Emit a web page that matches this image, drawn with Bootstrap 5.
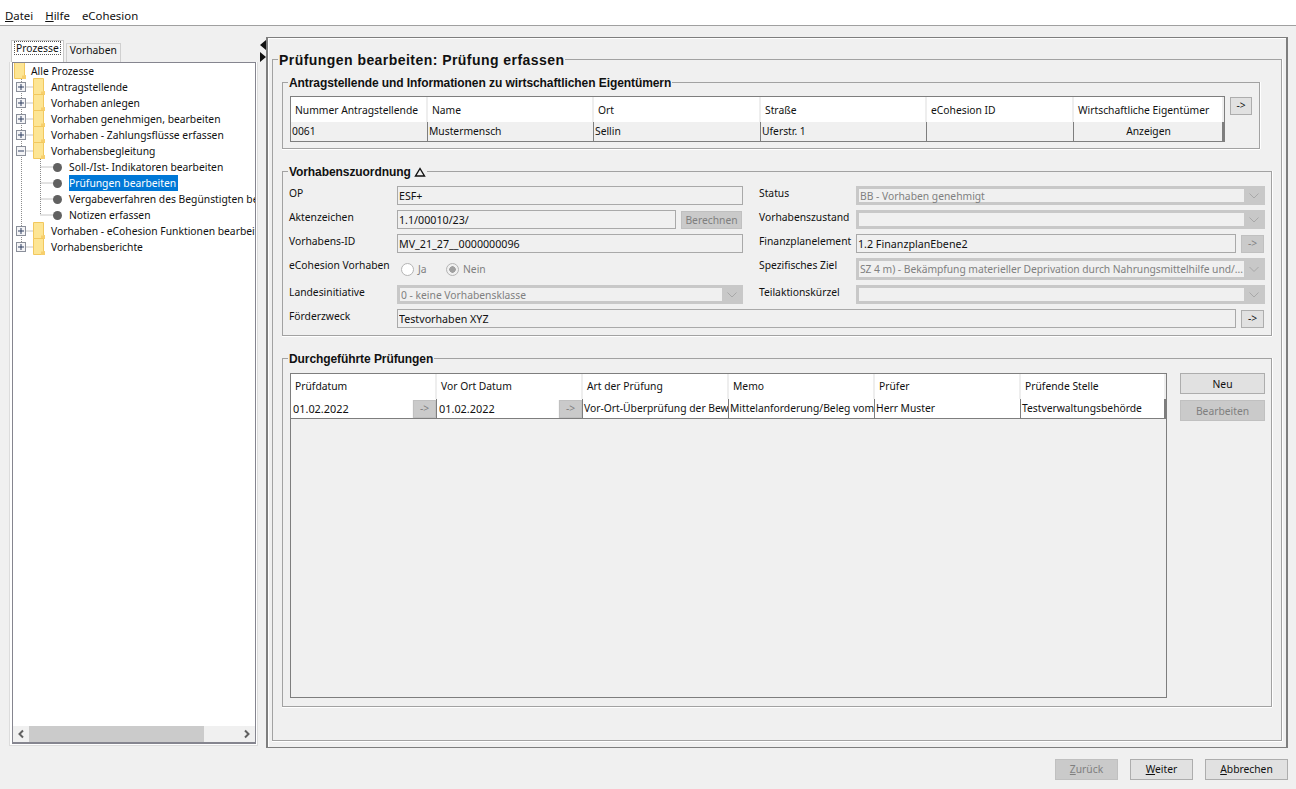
<!DOCTYPE html>
<html lang="de">
<head>
    <meta charset="UTF-8">
    <meta name="viewport" content="width=device-width, initial-scale=1.0">
    <title>Prüfungen bearbeiten</title>
    <link href="https://cdn.jsdelivr.net/npm/bootstrap@5.3.3/dist/css/bootstrap.min.css" rel="stylesheet">
    <style>
        html, body { height: 100%; }
        body {
            margin: 0;
            overflow: hidden;
            background: #f0f0f0;
            color: #111;
            font-family: "Noto Sans", "Liberation Sans", sans-serif;
            font-size: 10.3px;
            line-height: 16px;
        }
        .app-shell { height: 789px; }

        /* menu */
        .menu-bar { height: 26px; background: #fff; border-bottom: 1px solid #a0a0a0; padding: 6px 0 0 5px; gap: 12px; font-size: 11.4px; }
        .menu-bar a { color: #111; text-decoration: none; }
        .menu-bar u { text-decoration: underline; }

        .work-area { height: 721px; }

        /* left */
        .side-col { width: 249px; margin-left: 9px; padding-top: 14px; }
        .tab-strip { height: 22px; padding-left: 2px; gap: 2px; }
        .tab-item { border: 1px solid #d0d0d0; border-bottom: 0; padding: 0 3px; height: 19px; line-height: 13px; }
        .tab-item.is-active { height: 22px; background: #fff; border-color: #c8c8c8; line-height: 12px; padding: 1px 3px 0; }
        .tab-item.is-active span { outline: 1px dotted #555; padding: 0 1px; display: inline-block; line-height: 12px; }
        .tree-outer { height: 684px; padding: 0 1px 1px 2px; border: 1px solid #dcdcdc; border-top: 0; background: #fff; }
        .tree-box { height: 100%; border: 1px solid #85858f; border-width: 1px 1px 2px 1px; background: #fff; overflow: hidden; }
        .tree-rows { overflow: hidden; }
        .tree-lines { position: absolute; left: 0; top: 0; }
        .tree-row { height: 16px; white-space: nowrap; position: relative; }
        .lvl-0 { padding-left: 0; }
        .lvl-1 { padding-left: 19px; }
        .lvl-2 { padding-left: 40px; }
        .tree-folder { width: 14px; height: 18px; flex: none; margin-right: 5px; }
        .lvl-0 .tree-folder { margin-right: 4px; }
        .tree-twisty { position: absolute; left: 3px; top: 3px; width: 10px; height: 10px; }
        .tree-dot { width: 9px; height: 9px; border-radius: 50%; background: #616161; flex: none; margin-right: 7px; }
        .tree-sel { background: #0078d7; color: #fff; padding-right: 2px; }
        .scroll-track { height: 16px; background: #f0f0f0; flex: none; }
        .scroll-arrow { width: 16px; flex: none; }
        .scroll-thumb { width: 175px; background: #cbcbcb; }

        /* splitter */
        .split-col { width: 8px; padding-top: 14px; padding-left: 2px; }

        /* right */
        .main-frame { width: 1022px; height: 711px; margin-top: 11px; border: 1px solid #7e7e7e; border-left-width: 2px; border-right-width: 2px; box-shadow: inset 1px 1px 0 #fff; padding: 0 4px 5px 4px; }
        fieldset.box-set { border: 1px solid #a2a2a2; padding: 0 7px; margin: 0; box-shadow: 0 1px 0 #fff, 1px 0 0 #fff; }
        fieldset.box-set > legend { float: none; width: auto; height: 14px; margin: 0 0 0 -2px; padding: 0 1px; font-family: "Liberation Sans", Arial, sans-serif; font-weight: 700; font-size: 12px; line-height: 16px; letter-spacing: -.08px; color: #111; }
        .page-set { height: 690px; margin-top: 13px !important; padding: 0 9px !important; }
        fieldset.page-set > legend { height: 16px; font-size: 14px; line-height: 18px; letter-spacing: .45px; margin-left: -4px; }
        .owner-set { margin-top: 8px !important; margin-right: 12px !important; padding-top: 7px !important; padding-bottom: 6px !important; }
        .assign-set { margin-top: 15px !important; padding: 8px 7px 7px 6px !important; }
        fieldset.assign-set > legend { margin-left: -1px; }
        .checks-set { margin-top: 15px !important; padding-top: 8px !important; padding-bottom: 8px !important; }

        /* tables */
        .data-table { table-layout: fixed; border-collapse: separate; border-spacing: 0; margin: 0; width: 100%; --bs-table-bg: transparent; }
        .data-table th, .data-table td { font-weight: 400; padding: 0; white-space: nowrap; overflow: hidden; border: 0; color: #111; }
        .data-table th { background: #fff; height: 25px; padding: 1px 0 0 4px; border-right: 2px solid #eee; vertical-align: middle; }
        .data-table td { height: 20px; padding: 0 0 1px 1px; border-right: 1px solid #7e7e7e; border-bottom: 1px solid #7e7e7e; vertical-align: middle; }
        .owner-wrap { border: 1px solid #7e7e7e; border-bottom: 0; width: 935px; }
        .owner-wrap td { background: #f0f0f0; }
        .owner-wrap td:last-child, .checks-wrap td:last-child { border-right-width: 2px; }
        .checks-wrap { border: 1px solid #7e7e7e; width: 877px; height: 325px; }
        .checks-wrap th { padding-top: 0; padding-bottom: 1px; }
        .checks-wrap td { background: #fff; }
        .date-cell { padding: 0 !important; }
        .date-cell .date-text { padding: 1px 0 0 2px; width: 121px; font-size: 10.9px; }
        .date-cell .date-fill { background: #f7f7f7; }

        /* buttons */
        .flat-btn { --bs-btn-padding-x: 0; --bs-btn-padding-y: 0; --bs-btn-font-size: 10.3px; --bs-btn-line-height: 16px; --bs-btn-border-radius: 0; background: #e1e1e1; border: 1px solid #adadad; color: #111; height: 21px; width: 63px; }
        .flat-btn:disabled, .flat-btn.disabled { background: #cacaca; border-color: #c0c0c0; color: #7f7f7f; opacity: 1; }
        .flat-btn u { text-decoration: underline; }
        .arrow-btn { width: 23px; height: 18px; line-height: 14px; padding: 0 0 2px 0; }
        .owner-arrow { margin: 1px 0 0 5px; }
        .field-arrow { margin: 1px 0 0 5px; }
        .calc-btn { height: 18px; width: 61px; margin: 1px 0 0 1px; }

        /* form grid */
        .form-lines { display: grid; grid-template-columns: 108px 346px 16px 97px 409px; grid-template-rows: 19px 19px 19px 22px 19px 19px; row-gap: 5px; }
        .form-lab { line-height: 14px; }
        .plain-input { border-radius: 0; height: 19px; min-height: 0; padding: 0 1px; border: 1px solid #a9a9a9; background: #f0f0f0 !important; font-size: 10.7px; line-height: 17px; color: #111; opacity: 1; box-shadow: none !important; }
        .combo-box { height: 19px; background: #c8c8c8; padding: 3px; color: #808080; }
        .combo-tall { height: 22px; }
        .combo-text { background: #f0f0f0; flex-grow: 1; line-height: 15px; height: 13px; padding-left: 1px; white-space: nowrap; min-width: 0; }
        .combo-tall .combo-text { line-height: 16px; height: 16px; letter-spacing: -.04px; overflow: hidden; }
        .combo-arrow { width: 16px; flex: none; margin-left: 2px; }
        .radio-mark { width: 13px; height: 13px; margin: 0 4px 0 0; border: 1px solid #b4b4b4; background-color: #fff; border-radius: 50%; appearance: none; flex: none; opacity: 1 !important; }
        .radio-mark:checked { background: radial-gradient(circle, #a0a0a0 0 3px, #f0f0f0 3.5px); }
        .radio-text { color: #808080; }
        .radio-ja { width: 28px; }
        .side-buttons { width: 85px; margin-left: 13px; gap: 6px; }
        .side-buttons .flat-btn { width: 85px; height: 21px; }
        .bottom-bar { gap: 12px; padding: 12px 8px 0 0; }
        .bottom-bar .flat-btn { padding-bottom: 2px; }
        .wide-btn { width: 83px; }
        .wide-field { grid-column: 2 / 6; }
    </style>
</head>
<body>
    <svg width="0" height="0" class="position-absolute">
        <symbol id="folder" viewBox="0 0 14 18">
            <path d="M1.5.5H11.5V13.5H12.5V16.5H1.5Z" fill="#fde594" stroke="#f2c85e"/>
            <path d="M9 13.5H13V17H9Z" fill="#f7cf6d"/>
        </symbol>
        <symbol id="plusbox" viewBox="0 0 10 10">
            <rect x=".5" y=".5" width="9" height="9" fill="#f4f4f6" stroke="#8a8f9a"/>
            <path d="M2 5H8M5 2V8" stroke="#2f3f60"/>
        </symbol>
        <symbol id="minusbox" viewBox="0 0 10 10">
            <rect x=".5" y=".5" width="9" height="9" fill="#f4f4f6" stroke="#8a8f9a"/>
            <path d="M2 5H8" stroke="#2f3f60"/>
        </symbol>
        <symbol id="chev" viewBox="0 0 16 13">
            <path d="M3.5 4.5L8 9L12.5 4.5" fill="none" stroke="#a8a8a8"/>
        </symbol>
    </svg>

    <div class="app-shell d-flex flex-column">
        <nav class="menu-bar d-flex align-items-center">
            <a href="#"><u>D</u>atei</a>
            <a href="#"><u>H</u>ilfe</a>
            <a href="#">eCohesion</a>
        </nav>

        <div class="work-area d-flex">
            <!-- process tree -->
            <div class="side-col flex-none">
                <div class="tab-strip d-flex align-items-end">
                    <div class="tab-item is-active"><span>Prozesse</span></div>
                    <div class="tab-item">Vorhaben</div>
                </div>
                <div class="tree-outer">
                    <div class="tree-box d-flex flex-column">
                        <div class="tree-rows flex-grow-1 position-relative">
                            <svg class="tree-lines" width="243" height="200">
                                <path d="M8.5 16V184M8.5 24H20M8.5 40H20M8.5 56H20M8.5 72H20M8.5 88H20M8.5 168H20M8.5 184H20" stroke="#8c8c8c" stroke-dasharray="1 1" fill="none"/>
                                <path d="M27.5 96V152M27.5 104H41M27.5 120H41M27.5 136H41M27.5 152H41" stroke="#8c8c8c" stroke-dasharray="1 1" fill="none"/>
                            </svg>
                            <div class="tree-row lvl-0 d-flex align-items-center"><svg class="tree-folder"><use href="#folder"/></svg>Alle Prozesse</div>
                            <div class="tree-row lvl-1 d-flex align-items-center"><svg class="tree-twisty"><use href="#plusbox"/></svg><svg class="tree-folder"><use href="#folder"/></svg>Antragstellende</div>
                            <div class="tree-row lvl-1 d-flex align-items-center"><svg class="tree-twisty"><use href="#plusbox"/></svg><svg class="tree-folder"><use href="#folder"/></svg>Vorhaben anlegen</div>
                            <div class="tree-row lvl-1 d-flex align-items-center"><svg class="tree-twisty"><use href="#plusbox"/></svg><svg class="tree-folder"><use href="#folder"/></svg>Vorhaben genehmigen, bearbeiten</div>
                            <div class="tree-row lvl-1 d-flex align-items-center"><svg class="tree-twisty"><use href="#plusbox"/></svg><svg class="tree-folder"><use href="#folder"/></svg>Vorhaben - Zahlungsflüsse erfassen</div>
                            <div class="tree-row lvl-1 d-flex align-items-center"><svg class="tree-twisty"><use href="#minusbox"/></svg><svg class="tree-folder"><use href="#folder"/></svg>Vorhabensbegleitung</div>
                            <div class="tree-row lvl-2 d-flex align-items-center"><span class="tree-dot"></span>Soll-/Ist- Indikatoren bearbeiten</div>
                            <div class="tree-row lvl-2 d-flex align-items-center"><span class="tree-dot"></span><span class="tree-sel">Prüfungen bearbeiten</span></div>
                            <div class="tree-row lvl-2 d-flex align-items-center"><span class="tree-dot"></span>Vergabeverfahren des Begünstigten bearbeiten</div>
                            <div class="tree-row lvl-2 d-flex align-items-center"><span class="tree-dot"></span>Notizen erfassen</div>
                            <div class="tree-row lvl-1 d-flex align-items-center"><svg class="tree-twisty"><use href="#plusbox"/></svg><svg class="tree-folder"><use href="#folder"/></svg>Vorhaben - eCohesion Funktionen bearbeiten</div>
                            <div class="tree-row lvl-1 d-flex align-items-center"><svg class="tree-twisty"><use href="#plusbox"/></svg><svg class="tree-folder"><use href="#folder"/></svg>Vorhabensberichte</div>
                        </div>
                        <div class="scroll-track d-flex">
                            <div class="scroll-arrow d-flex align-items-center justify-content-center">
                                <svg width="8" height="10"><path d="M6 1.5L2.5 5L6 8.5" fill="none" stroke="#606060" stroke-width="2"/></svg>
                            </div>
                            <div class="scroll-thumb"></div>
                            <div class="flex-grow-1"></div>
                            <div class="scroll-arrow d-flex align-items-center justify-content-center">
                                <svg width="8" height="10"><path d="M2 1.5L5.5 5L2 8.5" fill="none" stroke="#606060" stroke-width="2"/></svg>
                            </div>
                        </div>
                    </div>
                </div>
            </div>

            <!-- one touch splitter -->
            <div class="split-col flex-none">
                <svg width="6" height="22" class="d-block"><path d="M6 0V10L0 5ZM0 12L6 17L0 22Z" fill="#111"/></svg>
            </div>

            <div class="main-frame flex-none">
                <fieldset class="box-set page-set">
                    <legend>Prüfungen bearbeiten: Prüfung erfassen</legend>

                    <fieldset class="box-set owner-set">
                        <legend>Antragstellende und Informationen zu wirtschaftlichen Eigentümern</legend>
                        <div class="d-flex align-items-start">
                            <div class="owner-wrap flex-none">
                                <table class="table data-table">
                                    <colgroup><col style="width:137px"><col style="width:166px"><col style="width:167px"><col style="width:166px"><col style="width:147px"><col style="width:150px"></colgroup>
                                    <thead><tr><th>Nummer Antragstellende</th><th>Name</th><th>Ort</th><th>Straße</th><th>eCohesion ID</th><th>Wirtschaftliche Eigentümer</th></tr></thead>
                                    <tbody><tr><td>0061</td><td>Mustermensch</td><td>Sellin</td><td>Uferstr. 1</td><td></td><td class="text-center">Anzeigen</td></tr></tbody>
                                </table>
                            </div>
                            <button type="button" class="btn flat-btn arrow-btn owner-arrow">-&gt;</button>
                        </div>
                    </fieldset>

                    <fieldset class="box-set assign-set">
                        <legend>Vorhabenszuordnung <svg width="12" height="10" style="vertical-align:-1px"><path d="M6 1.5L10.5 9H1.5Z" fill="none" stroke="#111" stroke-width="1.4"/></svg></legend>
                        <div class="form-lines">
                            <div class="form-lab">OP</div>
                            <input class="form-control plain-input" value="ESF+" readonly>
                            <div></div>
                            <div class="form-lab">Status</div>
                            <div class="combo-box d-flex"><div class="combo-text">BB - Vorhaben genehmigt</div><svg class="combo-arrow" height="13"><use href="#chev"/></svg></div>

                            <div class="form-lab">Aktenzeichen</div>
                            <div class="d-flex gap-1">
                                <input class="form-control plain-input flex-none" style="width:279px" value="1.1/00010/23/" readonly>
                                <button type="button" class="btn flat-btn calc-btn flex-none" disabled>Berechnen</button>
                            </div>
                            <div></div>
                            <div class="form-lab">Vorhabenszustand</div>
                            <div class="combo-box d-flex"><div class="combo-text"></div><svg class="combo-arrow" height="13"><use href="#chev"/></svg></div>

                            <div class="form-lab">Vorhabens-ID</div>
                            <input class="form-control plain-input" value="MV_21_27__0000000096" readonly>
                            <div></div>
                            <div class="form-lab">Finanzplanelement</div>
                            <div class="d-flex">
                                <input class="form-control plain-input flex-none" style="width:380px" value="1.2 FinanzplanEbene2" readonly>
                                <button type="button" class="btn flat-btn arrow-btn field-arrow flex-none" disabled>-&gt;</button>
                            </div>

                            <div class="form-lab">eCohesion Vorhaben</div>
                            <div class="d-flex align-items-center ps-1">
                                <input class="radio-mark" type="radio" name="eco" disabled><span class="radio-text radio-ja">Ja</span>
                                <input class="radio-mark" type="radio" name="eco" checked disabled><span class="radio-text">Nein</span>
                            </div>
                            <div></div>
                            <div class="form-lab">Spezifisches Ziel</div>
                            <div class="combo-box combo-tall d-flex"><div class="combo-text">SZ 4 m) - Bekämpfung materieller Deprivation durch Nahrungsmittelhilfe und/...</div><svg class="combo-arrow" height="16"><use href="#chev"/></svg></div>

                            <div class="form-lab">Landesinitiative</div>
                            <div class="combo-box d-flex"><div class="combo-text">0 - keine Vorhabensklasse</div><svg class="combo-arrow" height="13"><use href="#chev"/></svg></div>
                            <div></div>
                            <div class="form-lab">Teilaktionskürzel</div>
                            <div class="combo-box d-flex"><div class="combo-text"></div><svg class="combo-arrow" height="13"><use href="#chev"/></svg></div>

                            <div class="form-lab">Förderzweck</div>
                            <div class="d-flex wide-field">
                                <input class="form-control plain-input flex-none" style="width:839px" value="Testvorhaben XYZ" readonly>
                                <button type="button" class="btn flat-btn arrow-btn field-arrow flex-none">-&gt;</button>
                            </div>
                        </div>
                    </fieldset>

                    <fieldset class="box-set checks-set">
                        <legend>Durchgeführte Prüfungen</legend>
                        <div class="d-flex align-items-start">
                            <div class="checks-wrap flex-none">
                                <table class="table data-table">
                                    <colgroup><col style="width:146px"><col style="width:146px"><col style="width:146px"><col style="width:146px"><col style="width:146px"><col style="width:145px"></colgroup>
                                    <thead><tr><th>Prüfdatum</th><th>Vor Ort Datum</th><th>Art der Prüfung</th><th>Memo</th><th>Prüfer</th><th>Prüfende Stelle</th></tr></thead>
                                    <tbody>
                                        <tr>
                                            <td class="date-cell"><div class="d-flex"><div class="date-text">01.02.2022</div><div class="date-fill flex-grow-1 d-flex"><button type="button" class="btn flat-btn arrow-btn flex-none ms-auto" disabled>-&gt;</button></div></div></td>
                                            <td class="date-cell"><div class="d-flex"><div class="date-text">01.02.2022</div><div class="date-fill flex-grow-1 d-flex"><button type="button" class="btn flat-btn arrow-btn flex-none ms-auto" disabled>-&gt;</button></div></div></td>
                                            <td>Vor-Ort-Überprüfung der Bew</td>
                                            <td>Mittelanforderung/Beleg vom</td>
                                            <td>Herr Muster</td>
                                            <td>Testverwaltungsbehörde</td>
                                        </tr>
                                    </tbody>
                                </table>
                            </div>
                            <div class="side-buttons d-flex flex-column flex-none">
                                <button type="button" class="btn flat-btn">Neu</button>
                                <button type="button" class="btn flat-btn" disabled>Bearbeiten</button>
                            </div>
                        </div>
                    </fieldset>
                </fieldset>
            </div>
        </div>

        <div class="bottom-bar d-flex justify-content-end">
            <button type="button" class="btn flat-btn" disabled><u>Z</u>urück</button>
            <button type="button" class="btn flat-btn"><u>W</u>eiter</button>
            <button type="button" class="btn flat-btn wide-btn"><u>A</u>bbrechen</button>
        </div>
    </div>

    <script src="https://cdn.jsdelivr.net/npm/bootstrap@5.3.3/dist/js/bootstrap.bundle.min.js"></script>
</body>
</html>
